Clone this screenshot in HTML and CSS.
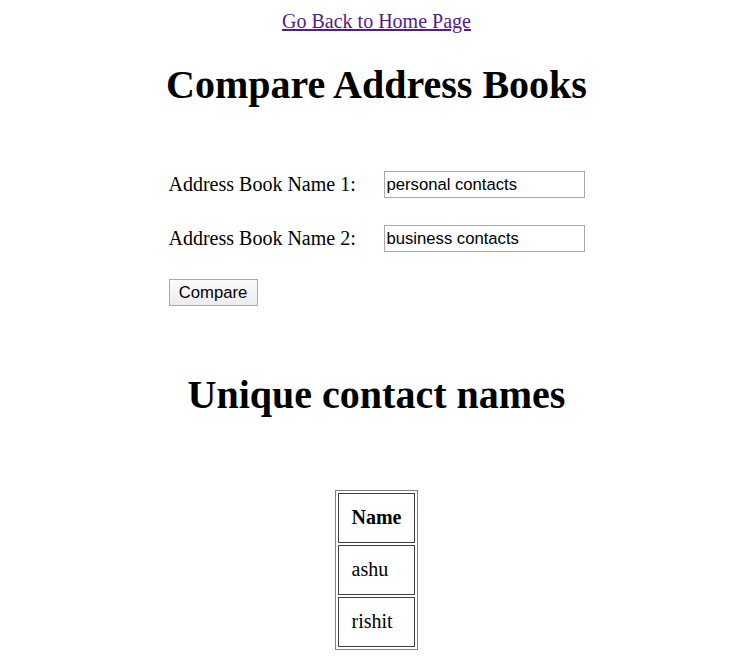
FILE: index.html
```html
<!DOCTYPE html>
<html>
<head>
<meta charset="utf-8">
<link rel="stylesheet" href="styles.css">
</head>
<body>
<div class="nav"><a href="#" class="home-link">Go Back to Home Page</a></div>
<h1 class="title">Compare Address Books</h1>
<form class="compare-form">
  <div class="form-row">
    <label class="form-label">Address Book Name 1:</label>
    <input class="form-input" type="text" value="personal contacts">
  </div>
  <div class="form-row">
    <label class="form-label">Address Book Name 2:</label>
    <input class="form-input" type="text" value="business contacts">
  </div>
  <div class="form-actions">
    <button type="button" class="btn">Compare</button>
  </div>
</form>
<h2 class="title sub">Unique contact names</h2>
<div class="table-wrap">
  <table class="names">
    <tr><th>Name</th></tr>
    <tr><td>ashu</td></tr>
    <tr><td>rishit</td></tr>
  </table>
</div>
</body>
</html>
```
FILE: styles.css
```css
html, body {
  margin: 0;
  padding: 0;
  background: #fff;
}
body {
  font-family: "Liberation Serif", "Times New Roman", serif;
  font-size: 20px;
  color: #000;
}
.nav {
  text-align: center;
  padding-top: 10px;
  line-height: 23px;
}
.home-link {
  color: #551a8b;
  text-decoration: underline;
}
.title {
  text-align: center;
  font-size: 40px;
  font-weight: bold;
  line-height: 46px;
  margin: 29px 0 0;
}
.compare-form {
  width: 416px;
  margin: 63px auto 0;
  display: flex;
  flex-direction: column;
  gap: 27px;
}
.form-row {
  display: flex;
  align-items: center;
  height: 27px;
}
.form-label {
  width: 215px;
  flex: none;
  line-height: 23px;
}
.form-input {
  box-sizing: border-box;
  width: 201px;
  height: 27px;
  margin: 0;
  padding: 0 2px;
  border: 1px solid #a9a9a9;
  font-family: "Liberation Sans", Arial, sans-serif;
  font-size: 16.67px;
  color: #000;
}
.form-actions {
  display: flex;
}
.btn {
  box-sizing: border-box;
  width: 89px;
  height: 27px;
  padding: 0;
  border: 1px solid #a9a9a9;
  border-radius: 0;
  background: linear-gradient(#fbfbfb, #ececec);
  font-family: "Liberation Sans", Arial, sans-serif;
  font-size: 16.67px;
  color: #000;
}
.sub {
  margin-top: 66px;
}
.table-wrap {
  display: flex;
  justify-content: center;
  margin-top: 72px;
}
.names {
  border: 1px solid #808080;
  border-spacing: 2px;
}
.names th, .names td {
  border: 1px solid #404040;
  padding: 12px 13px 13px;
  line-height: 23px;
  text-align: left;
}
.names th {
  font-weight: bold;
}
```
